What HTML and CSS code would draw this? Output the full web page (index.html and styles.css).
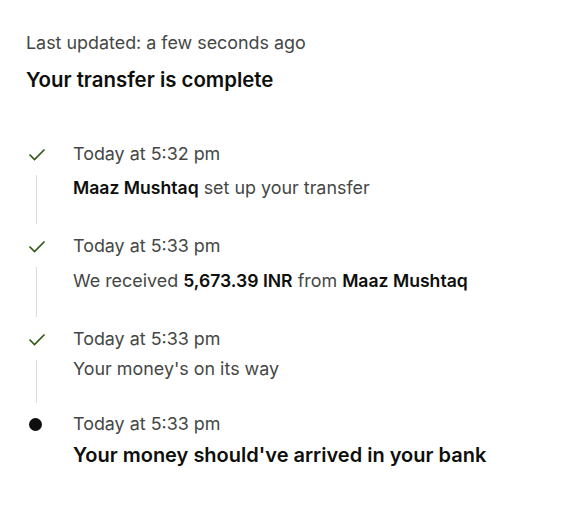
FILE: index.html
```html
<!DOCTYPE html>
<html>
<head>
<meta charset="utf-8">
<link rel="stylesheet" href="styles.css">
</head>
<body>
<main class="page">
  <p class="updated">Last updated: a few seconds ago</p>
  <h1 class="title">Your transfer is complete</h1>
  <ol class="timeline">
    <li class="step step--a">
      <div class="marker">
        <svg class="check" width="18" height="14" viewBox="0 0 18 14"><path d="M1.5 6.5 L6.5 11.5 L16.5 1.5" fill="none" stroke="#2f5711" stroke-width="1.6"/></svg>
        <span class="rail"></span>
      </div>
      <div class="body">
        <div class="time">Today at 5:32 pm</div>
        <div class="desc"><b>Maaz Mushtaq</b> set up your transfer</div>
      </div>
    </li>
    <li class="step step--b">
      <div class="marker">
        <svg class="check" width="18" height="14" viewBox="0 0 18 14"><path d="M1.5 6.5 L6.5 11.5 L16.5 1.5" fill="none" stroke="#2f5711" stroke-width="1.6"/></svg>
        <span class="rail"></span>
      </div>
      <div class="body">
        <div class="time">Today at 5:33 pm</div>
        <div class="desc">We received <b>5,673.39 INR</b> from <b>Maaz Mushtaq</b></div>
      </div>
    </li>
    <li class="step step--c">
      <div class="marker">
        <svg class="check" width="18" height="14" viewBox="0 0 18 14"><path d="M1.5 6.5 L6.5 11.5 L16.5 1.5" fill="none" stroke="#2f5711" stroke-width="1.6"/></svg>
        <span class="rail"></span>
      </div>
      <div class="body">
        <div class="time">Today at 5:33 pm</div>
        <div class="desc">Your money's on its way</div>
      </div>
    </li>
    <li class="step step--d">
      <div class="marker">
        <span class="dot"></span>
      </div>
      <div class="body">
        <div class="time">Today at 5:33 pm</div>
        <div class="desc desc--strong">Your money should've arrived in your bank</div>
      </div>
    </li>
  </ol>
</main>
</body>
</html>
```

FILE: styles.css
```css
* { box-sizing: border-box; }
html, body { margin: 0; padding: 0; background: #fff; }
body {
  font-family: Inter, "Noto Sans", sans-serif;
  color: #454745;
  -webkit-font-smoothing: antialiased;
}
.page { padding: 31px 26px 0 26px; }
.updated {
  margin: 0;
  font-size: 17.9px;
  line-height: 24px;
  color: #454745;
}
.title {
  margin: 12px 0 0 0;
  font-size: 20.4px;
  line-height: 26px;
  font-weight: 600;
  color: #0e0f0c;
}
.timeline {
  list-style: none;
  margin: 49px 0 0 0;
  padding: 0;
}
.step {
  display: grid;
  grid-template-columns: 47px 1fr;
}
.marker {
  display: flex;
  flex-direction: column;
  align-items: flex-start;
}
.check { margin: 6px 0 0 2px; display: block; }
.rail {
  display: block;
  width: 1px;
  background: #dcdcdc;
  margin-left: 10px;
  flex: 1;
}
.step--a .rail, .step--b .rail { margin-top: 13px; margin-bottom: 10px; }
.step--c .rail { margin-top: 13px; margin-bottom: 9px; }
.dot {
  display: block;
  width: 13px;
  height: 13px;
  border-radius: 50%;
  background: #0e0f0c;
  margin: 6px 0 0 3px;
}
.time {
  font-size: 17.9px;
  line-height: 24px;
  color: #454745;
}
.desc {
  font-size: 17.9px;
  line-height: 24px;
  color: #454745;
}
.desc b { font-weight: 600; color: #0e0f0c; font-size: 17.6px; }
.step--a .desc { margin-top: 10px; }
.step--a .body { padding-bottom: 34px; }
.step--b .desc { margin-top: 11px; }
.step--b .body { padding-bottom: 34px; }
.step--c .desc { margin-top: 6px; }
.step--c .body { padding-bottom: 31px; }
.step--d .desc { margin-top: 7px; }
.desc--strong {
  font-size: 20px;
  line-height: 24px;
  font-weight: 600;
  color: #0e0f0c;
}
```
